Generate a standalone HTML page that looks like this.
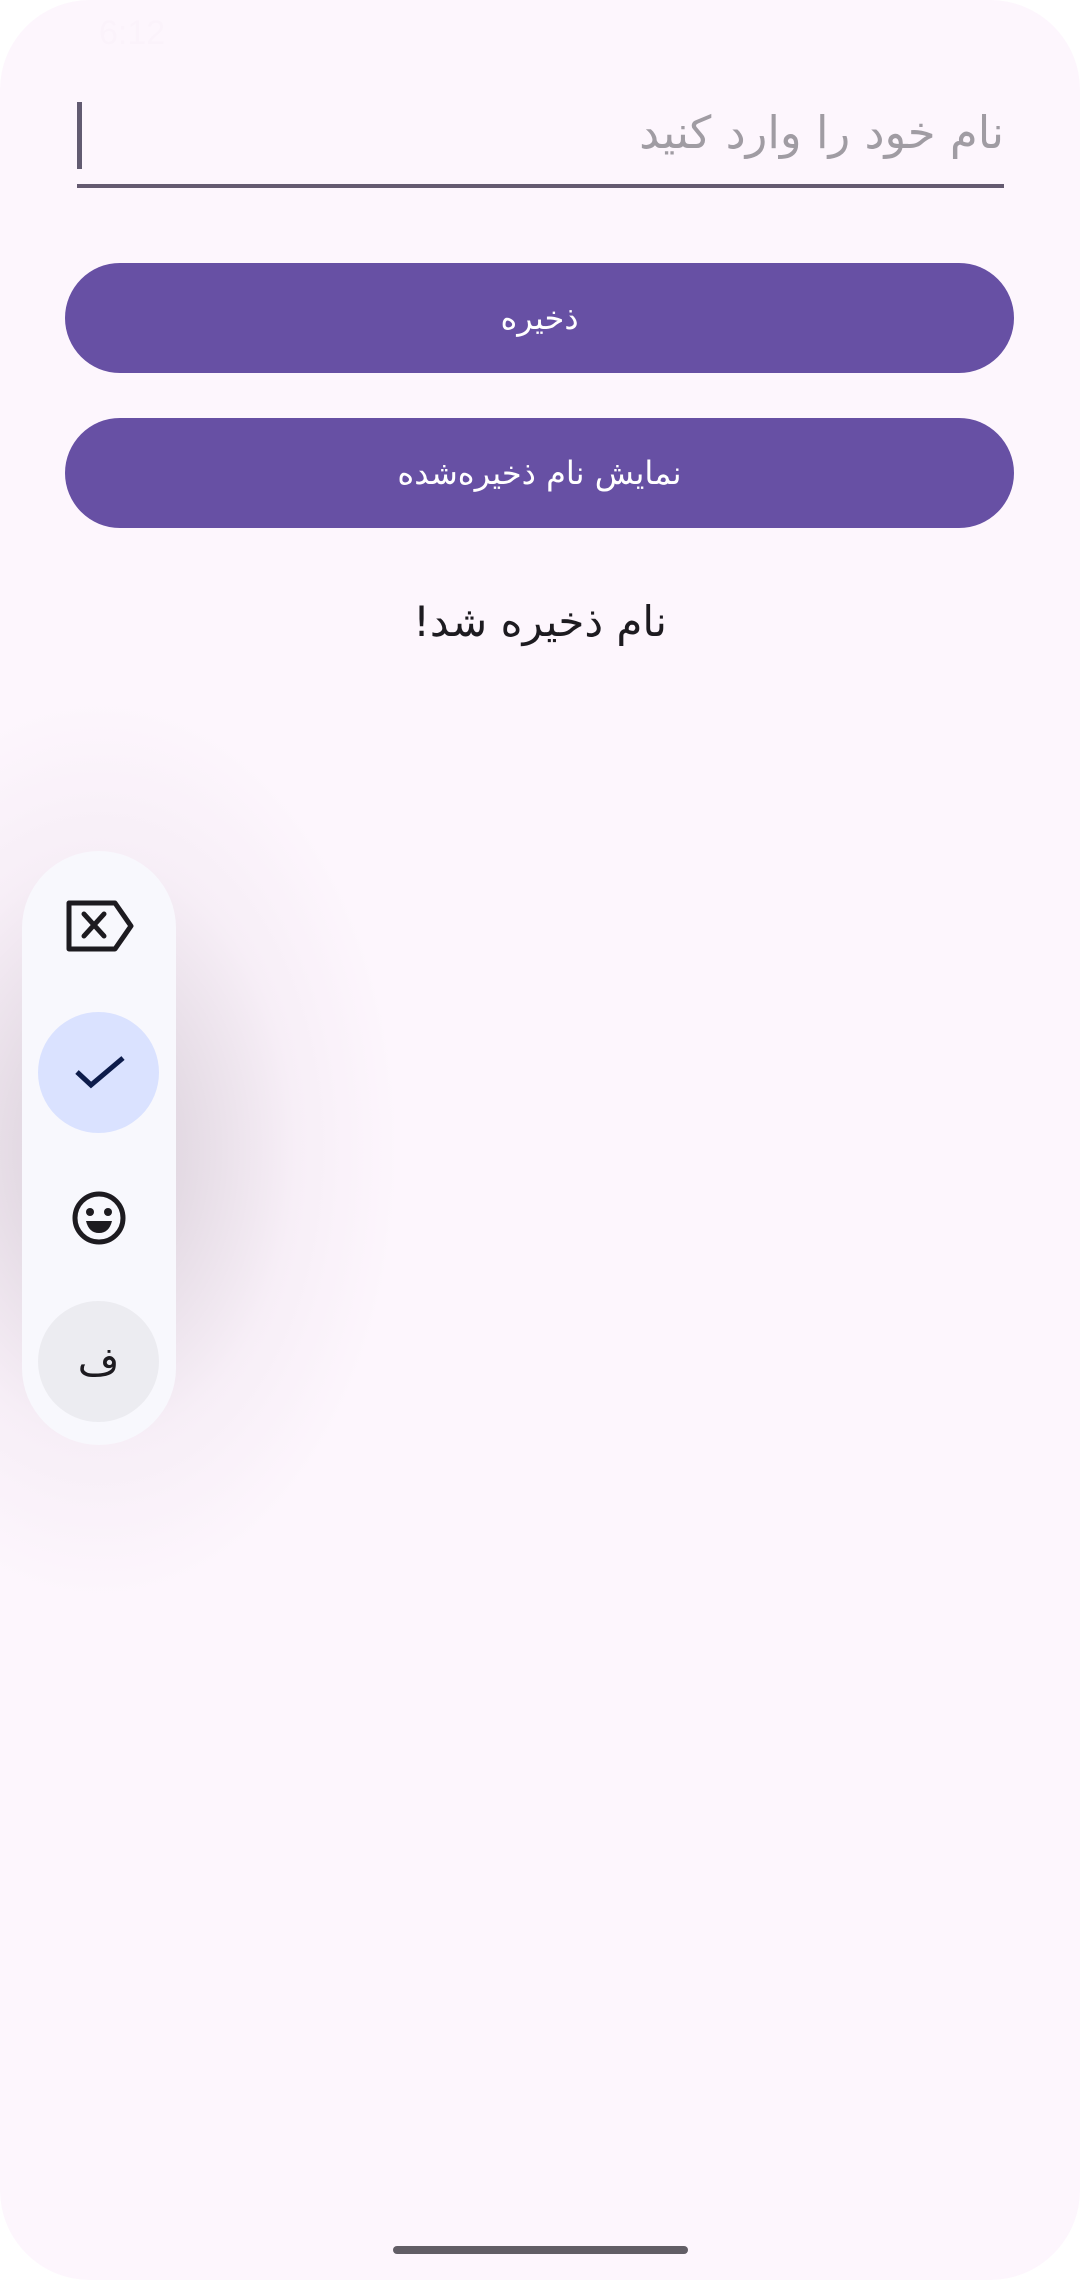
<!DOCTYPE html>
<html><head><meta charset="utf-8"><style>
html,body{margin:0;padding:0;background:#fff;}
body{width:1080px;height:2280px;position:relative;overflow:hidden;font-family:"DejaVu Sans","Liberation Sans",sans-serif;}
.screen{position:absolute;left:0;top:0;width:1080px;height:2280px;background:#fdf6fd;border-radius:90px;overflow:hidden;}
.abs{position:absolute;}
.btn{position:absolute;left:65px;width:949px;height:110px;border-radius:55px;background:#6750a4;color:#fff;font-size:32px;display:flex;align-items:center;justify-content:center;direction:rtl;}
</style></head><body><div class="screen">
<div class="abs" style="left:99px;top:14px;font-size:34px;color:#fbf3fb;font-family:'Liberation Sans',sans-serif;">6:12</div>
<div class="abs" style="left:77px;top:102px;width:5px;height:67px;background:#625b71;"></div>
<div class="abs" style="right:76px;top:106px;font-size:45px;color:#a09ca3;direction:rtl;">نام خود را وارد کنید</div>
<div class="abs" style="left:77px;top:184px;width:927px;height:4px;background:#645a70;"></div>
<div class="btn" style="top:263px;">ذخیره</div>
<div class="btn" style="top:418px;">نمایش نام ذخیره‌شده</div>
<div class="abs" style="left:0;width:1080px;top:597px;text-align:center;font-size:42px;color:#1d1b20;direction:rtl;">نام ذخیره شد!</div>
<div class="abs" style="left:-200px;top:700px;width:600px;height:900px;background:radial-gradient(ellipse 50% 50% at 50% 50%, rgba(120,100,120,0.28) 0%, rgba(120,100,120,0.18) 30%, rgba(150,120,150,0.06) 65%, rgba(253,246,253,0) 100%);"></div>
<div class="abs" style="left:22px;top:851px;width:154px;height:594px;border-radius:77px;background:#f8f8fd;"></div>
<svg class="abs" style="left:63px;top:899px" width="72" height="54" viewBox="0 0 72 54"><path d="M6 4 H52 L68 27 L52 50 H6 Z" fill="none" stroke="#1d1b20" stroke-width="5" stroke-linejoin="round"/><path d="M21 15 L41 37 M41 15 L21 37" stroke="#1d1b20" stroke-width="5" stroke-linecap="round"/></svg>
<div class="abs" style="left:38px;top:1012px;width:121px;height:121px;border-radius:50%;background:#dae2ff;"></div>
<svg class="abs" style="left:73px;top:1052px" width="54" height="40" viewBox="0 0 54 40"><path d="M4 20 L18 33 L50 6" fill="none" stroke="#0d1c4b" stroke-width="5"/></svg>
<svg class="abs" style="left:71px;top:1190px" width="56" height="56" viewBox="0 0 56 56"><circle cx="28" cy="28" r="24" fill="none" stroke="#1d1b20" stroke-width="5"/><circle cx="19" cy="22" r="4" fill="#1d1b20"/><circle cx="37" cy="22" r="4" fill="#1d1b20"/><path d="M15 31 H41 Q38 43 28 43 Q18 43 15 31Z" fill="#1d1b20"/></svg>
<div class="abs" style="left:38px;top:1301px;width:121px;height:121px;border-radius:50%;background:#ececf1;color:#1d1b20;font-size:40px;display:flex;align-items:center;justify-content:center;">ف</div>
<div class="abs" style="left:393px;top:2246px;width:295px;height:8px;border-radius:4px;background:#625e66;"></div>
</div></body></html>
